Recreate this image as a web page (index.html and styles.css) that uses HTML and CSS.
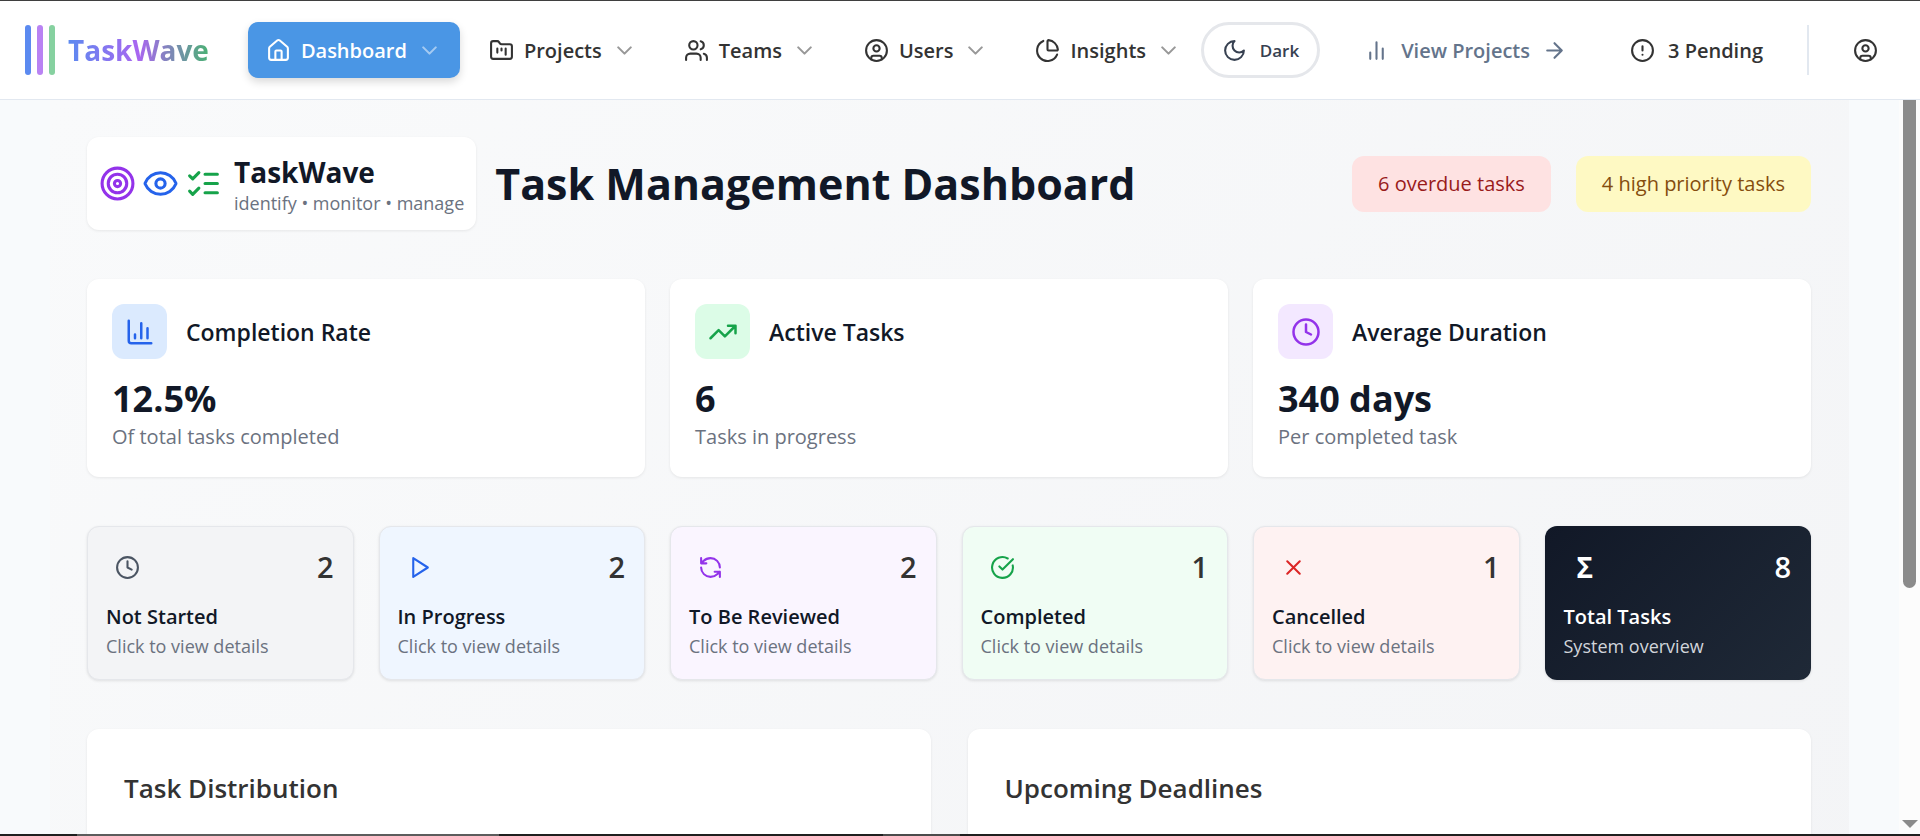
FILE: index.html
```html
<!DOCTYPE html>
<html lang="en">
<head>
<meta charset="utf-8">
<title>TaskWave</title>
<link rel="stylesheet" href="styles.css">
</head>
<body>
<svg class="sprite" aria-hidden="true">
  <symbol id="home" viewBox="0 0 24 24"><path d="M15 21v-8a1 1 0 0 0-1-1h-4a1 1 0 0 0-1 1v8"/><path d="M3 10a2 2 0 0 1 .709-1.528l7-5.999a2 2 0 0 1 2.582 0l7 5.999A2 2 0 0 1 21 10v9a2 2 0 0 1-2 2H5a2 2 0 0 1-2-2z"/></symbol>
  <symbol id="folder" viewBox="0 0 24 24"><path d="M4 20h16a2 2 0 0 0 2-2V8a2 2 0 0 0-2-2h-7.93a2 2 0 0 1-1.66-.9l-.82-1.2A2 2 0 0 0 7.93 3H4a2 2 0 0 0-2 2v13c0 1.1.9 2 2 2Z"/><path d="M8 10v4M12 10v2M16 10v6"/></symbol>
  <symbol id="users" viewBox="0 0 24 24"><path d="M16 21v-2a4 4 0 0 0-4-4H6a4 4 0 0 0-4 4v2"/><circle cx="9" cy="7" r="4"/><path d="M22 21v-2a4 4 0 0 0-3-3.87M16 3.13a4 4 0 0 1 0 7.75"/></symbol>
  <symbol id="user" viewBox="0 0 24 24"><circle cx="12" cy="12" r="10"/><circle cx="12" cy="10" r="3"/><path d="M7 20.662V19a2 2 0 0 1 2-2h6a2 2 0 0 1 2 2v1.662"/></symbol>
  <symbol id="pie" viewBox="0 0 24 24"><path d="M21 12c.552 0 1.005-.449.95-.998a10 10 0 0 0-8.953-8.951c-.55-.055-.998.398-.998.95v8a1 1 0 0 0 1 1z"/><path d="M21.21 15.89A10 10 0 1 1 8 2.83"/></symbol>
  <symbol id="chevron" viewBox="0 0 24 24"><path d="m6 9 6 6 6-6"/></symbol>
  <symbol id="moon" viewBox="0 0 24 24"><path d="M12 3a6 6 0 0 0 9 9 9 9 0 1 1-9-9Z"/></symbol>
  <symbol id="bars" viewBox="0 0 24 24"><path d="M18 20V10M12 20V4M6 20v-6"/></symbol>
  <symbol id="arrow" viewBox="0 0 24 24"><path d="M5 12h14M12 5l7 7-7 7"/></symbol>
  <symbol id="alert" viewBox="0 0 24 24"><circle cx="12" cy="12" r="10"/><path d="M12 8v4M12 16h.01"/></symbol>
  <symbol id="target" viewBox="0 0 24 24"><circle cx="12" cy="12" r="10"/><circle cx="12" cy="12" r="6"/><circle cx="12" cy="12" r="2"/></symbol>
  <symbol id="eye" viewBox="0 0 24 24"><path d="M2.062 12.348a1 1 0 0 1 0-.696 10.75 10.75 0 0 1 19.876 0 1 1 0 0 1 0 .696 10.75 10.75 0 0 1-19.876 0"/><circle cx="12" cy="12" r="3"/></symbol>
  <symbol id="checks" viewBox="0 0 24 24"><path d="m3 17 2 2 4-4M3 7l2 2 4-4M13 6h8M13 12h8M13 18h8"/></symbol>
  <symbol id="chart" viewBox="0 0 24 24"><path d="M3 3v16a2 2 0 0 0 2 2h16M18 17V9M13 17V5M8 17v-3"/></symbol>
  <symbol id="trend" viewBox="0 0 24 24"><path d="M22 7l-8.5 8.5-5-5L2 17M16 7h6v6"/></symbol>
  <symbol id="clock" viewBox="0 0 24 24"><circle cx="12" cy="12" r="10"/><path d="M12 6v6l4 2"/></symbol>
  <symbol id="play" viewBox="0 0 24 24"><path d="M6 3l14 9-14 9z"/></symbol>
  <symbol id="refresh" viewBox="0 0 24 24"><path d="M21 12a9 9 0 0 0-9-9 9.75 9.75 0 0 0-6.74 2.74L3 8M3 3v5h5M3 12a9 9 0 0 0 9 9 9.75 9.75 0 0 0 6.74-2.74L21 16M16 16h5v5"/></symbol>
  <symbol id="done" viewBox="0 0 24 24"><path d="M21.801 10A10 10 0 1 1 17 3.335M9 11l3 3L22 4"/></symbol>
  <symbol id="cross" viewBox="0 0 24 24"><path d="M18 6 6 18M6 6l12 12"/></symbol>
</svg>

<header class="topbar">
  <a class="logo" href="#">
    <span class="logo-bars"><i class="bar bar-blue"></i><i class="bar bar-purple"></i><i class="bar bar-green"></i></span>
    <span class="logo-text">TaskWave</span>
  </a>
  <nav class="nav">
    <button class="nav-item active"><svg class="icon"><use href="#home"/></svg>Dashboard<svg class="icon chev"><use href="#chevron"/></svg></button>
    <button class="nav-item"><svg class="icon"><use href="#folder"/></svg>Projects<svg class="icon chev"><use href="#chevron"/></svg></button>
    <button class="nav-item"><svg class="icon"><use href="#users"/></svg>Teams<svg class="icon chev"><use href="#chevron"/></svg></button>
    <button class="nav-item"><svg class="icon"><use href="#user"/></svg>Users<svg class="icon chev"><use href="#chevron"/></svg></button>
    <button class="nav-item"><svg class="icon"><use href="#pie"/></svg>Insights<svg class="icon chev"><use href="#chevron"/></svg></button>
  </nav>
  <div class="tools">
    <button class="theme"><svg class="icon"><use href="#moon"/></svg>Dark</button>
    <a class="view" href="#"><svg class="icon"><use href="#bars"/></svg>View Projects<svg class="icon"><use href="#arrow"/></svg></a>
    <button class="pending"><svg class="icon"><use href="#alert"/></svg>3 Pending</button>
    <span class="divider"></span>
    <button class="account" aria-label="Account"><svg class="icon"><use href="#user"/></svg></button>
  </div>
</header>

<div class="viewport">
  <div class="page">
    <main class="content">
      <section class="heading">
        <div class="brand">
          <div class="brand-icons">
            <svg class="icon-lg purple"><use href="#target"/></svg>
            <svg class="icon-lg blue"><use href="#eye"/></svg>
            <svg class="icon-lg green"><use href="#checks"/></svg>
          </div>
          <div class="brand-text">
            <div class="brand-name">TaskWave</div>
            <div class="brand-tag">identify • monitor • manage</div>
          </div>
        </div>
        <h1>Task Management Dashboard</h1>
        <div class="badges">
          <span class="badge overdue">6 overdue tasks</span>
          <span class="badge priority">4 high priority tasks</span>
        </div>
      </section>

      <section class="stats">
        <article class="card stat">
          <div class="stat-head"><span class="tile tile-blue"><svg class="icon-md"><use href="#chart"/></svg></span><h2>Completion Rate</h2></div>
          <div class="value">12.5%</div><div class="note">Of total tasks completed</div>
        </article>
        <article class="card stat">
          <div class="stat-head"><span class="tile tile-green"><svg class="icon-md"><use href="#trend"/></svg></span><h2>Active Tasks</h2></div>
          <div class="value">6</div><div class="note">Tasks in progress</div>
        </article>
        <article class="card stat">
          <div class="stat-head"><span class="tile tile-purple"><svg class="icon-md"><use href="#clock"/></svg></span><h2>Average Duration</h2></div>
          <div class="value">340 days</div><div class="note">Per completed task</div>
        </article>
      </section>

      <section class="statuses">
        <button class="status s-gray"><span class="status-top"><svg class="icon gray"><use href="#clock"/></svg><b>2</b></span><span class="status-name">Not Started</span><span class="status-sub">Click to view details</span></button>
        <button class="status s-blue"><span class="status-top"><svg class="icon blue"><use href="#play"/></svg><b>2</b></span><span class="status-name">In Progress</span><span class="status-sub">Click to view details</span></button>
        <button class="status s-purple"><span class="status-top"><svg class="icon purple"><use href="#refresh"/></svg><b>2</b></span><span class="status-name">To Be Reviewed</span><span class="status-sub">Click to view details</span></button>
        <button class="status s-green"><span class="status-top"><svg class="icon green"><use href="#done"/></svg><b>1</b></span><span class="status-name">Completed</span><span class="status-sub">Click to view details</span></button>
        <button class="status s-red"><span class="status-top"><svg class="icon red"><use href="#cross"/></svg><b>1</b></span><span class="status-name">Cancelled</span><span class="status-sub">Click to view details</span></button>
        <div class="status s-total"><span class="status-top"><span class="sigma">Σ</span><b>8</b></span><span class="status-name">Total Tasks</span><span class="status-sub">System overview</span></div>
      </section>

      <section class="panels">
        <article class="card panel"><h2>Task Distribution</h2></article>
        <article class="card panel"><h2>Upcoming Deadlines</h2></article>
      </section>
    </main>
  </div>
  <div class="scrollbar"><span class="thumb"></span><span class="down"></span></div>
</div>
<footer class="edge"><i class="seg seg-a"></i><i class="seg seg-b"></i><i class="seg seg-c"></i><i class="seg seg-d"></i></footer>
</body>
</html>
```

FILE: styles.css
```css
* { box-sizing: border-box; }
body {
  margin: 0;
  height: 100vh;
  display: flex;
  flex-direction: column;
  overflow: hidden;
  border-top: 1px solid #3f3f3f;
  background: #f8fafc;
  color: #333;
  font-family: "Open Sans", "Noto Sans", sans-serif;
}
button { font: inherit; color: inherit; background: none; border: 0; padding: 0; cursor: pointer; }
a { color: inherit; text-decoration: none; }
h1, h2 { margin: 0; }
svg { fill: none; stroke: currentColor; stroke-width: 2; stroke-linecap: round; stroke-linejoin: round; flex: none; display: block; }
.sprite { position: absolute; width: 0; height: 0; }
.icon { width: 25px; height: 25px; }
.icon-md { width: 30px; height: 30px; }
.icon-lg { width: 37px; height: 37px; }

.purple { color: #9333ea; }
.blue { color: #2563eb; }
.green { color: #16a34a; }
.red { color: #dc2626; }
.gray { color: #4b5563; }

/* Top bar */
.topbar {
  flex: none;
  display: flex;
  align-items: center;
  padding: 21px 42px 21px 25px;
  background: #fff;
  border-bottom: 1px solid #e2e8f0;
  font-size: 20px;
  font-weight: 600;
  white-space: nowrap;
}
.logo { display: flex; align-items: center; gap: 13px; margin-right: 39px; }
.logo-bars { display: flex; gap: 6px; }
.bar { width: 6px; height: 50px; border-radius: 3px; }
.bar-blue { background: #5b8af0; }
.bar-purple { background: #b983f3; }
.bar-green { background: #86d1a0; }
.logo-text {
  font-size: 28px;
  font-weight: 700;
  line-height: 40px;
  color: transparent;
  background: linear-gradient(90deg, #5b8af0, #a966f0 50%, #4bb174);
  -webkit-background-clip: text;
  background-clip: text;
}
.nav { display: flex; gap: 11px; }
.nav-item { display: flex; align-items: center; gap: 10px; height: 56px; padding: 0 18px; border-radius: 10px; }
.nav-item.active { background: #4a96e5; color: #fff; box-shadow: 0 4px 8px rgba(0, 0, 0, .15); }
.chev { opacity: .5; }
.tools { display: flex; align-items: center; margin-left: auto; gap: 44px; }
.theme {
  display: flex;
  align-items: center;
  gap: 13px;
  height: 56px;
  padding: 0 18px;
  border: 3px solid #e5e7eb;
  border-radius: 28px;
  color: #374151;
  font-size: 17px;
}
.view { display: flex; align-items: center; gap: 12px; color: #64748b; margin-right: 19px; }
.pending { display: flex; align-items: center; gap: 13px; }
.divider { width: 2px; height: 50px; background: #e2e8f0; }

/* Scrolling area */
.viewport { flex: 1; min-height: 0; display: flex; overflow: hidden; }
.page { flex: 1; min-width: 0; padding: 0 50px; overflow: hidden; }
.content { min-height: 100%; padding: 37px 38px 37px 37px; background: linear-gradient(135deg, #f9fafb, #f3f4f6); }
.scrollbar { width: 21px; background: #fcfcfc; display: flex; flex-direction: column; align-items: center; justify-content: space-between; padding-bottom: 6px; }
.thumb { width: 13px; flex: 0 0 67%; border-radius: 0 0 7px 7px; background: #8b8b8b; }
.down { border: 8px solid transparent; border-top-color: #8b8b8b; border-bottom: 0; }

.card { background: #fff; border-radius: 12px; box-shadow: 0 1px 3px rgba(0, 0, 0, .08); }

.heading { display: flex; align-items: center; }
.brand { display: flex; align-items: center; gap: 12px; padding: 12px; background: #fff; border-radius: 12px; box-shadow: 0 1px 3px rgba(0, 0, 0, .08); }
.brand-icons { display: flex; gap: 6px; }
.brand-text { padding-top: 6px; }
.brand-name { font-size: 28px; font-weight: 700; line-height: 34px; color: #111827; }
.brand-tag { font-size: 18px; line-height: 29px; color: #6b7280; }
h1 { margin-left: 19px; font-size: 43px; line-height: 60px; font-weight: 700; color: #111827; white-space: nowrap; }
.badges { margin-left: auto; display: flex; gap: 25px; white-space: nowrap; }
.badge { padding: 12px 26px; border-radius: 12px; font-size: 20px; line-height: 32px; }
.overdue { background: #fee2e2; color: #991b1b; }
.priority { background: #fef9c3; color: #854d0e; }

.stats { display: grid; grid-template-columns: repeat(3, 1fr); gap: 25px; margin-top: 49px; }
.stat { padding: 25px; }
.stat-head { display: flex; align-items: center; gap: 19px; margin-bottom: 18px; }
.stat-head h2 { font-size: 23px; line-height: 36px; font-weight: 600; color: #111827; }
.tile { display: grid; place-items: center; width: 55px; height: 55px; border-radius: 12px; }
.tile-blue { background: #dbeafe; color: #2563eb; }
.tile-green { background: #dcfce7; color: #16a34a; }
.tile-purple { background: #f3e8ff; color: #9333ea; }
.value { font-size: 36px; line-height: 44px; font-weight: 700; color: #111827; }
.note { font-size: 20px; line-height: 31px; color: #6b7280; }

.statuses { display: grid; grid-template-columns: repeat(6, 1fr); gap: 25px; margin-top: 49px; }
.status {
  display: flex;
  flex-direction: column;
  padding: 19px 19px 19px 18px;
  border: 1px solid #e5e7eb;
  border-radius: 12px;
  text-align: left;
  box-shadow: 0 1px 3px rgba(0, 0, 0, .1);
}
.status-top { display: flex; justify-content: space-between; align-items: center; height: 42px; padding-left: 9px; margin-bottom: 14px; }
.status-top b { font-size: 29px; line-height: 42px; font-weight: 600; }
.status-name { font-size: 20px; line-height: 30px; font-weight: 600; color: #111827; }
.status-sub { font-size: 18px; line-height: 28px; color: #6b7280; }
.s-gray { background: #f3f4f6; }
.s-blue { background: #eff6ff; }
.s-purple { background: #faf5ff; }
.s-green { background: #f0fdf4; }
.s-red { background: #fef2f2; }
.s-total { border-color: transparent; background: linear-gradient(135deg, #111827, #1f2937) border-box; color: #fff; }
.s-total .status-name { color: #fff; }
.s-total .status-sub { color: #d1d5db; }
.sigma { padding-left: 4px; font-size: 28px; line-height: 42px; font-weight: 700; }

.panels { display: grid; grid-template-columns: repeat(2, 1fr); gap: 37px; margin-top: 49px; }
.panel { min-height: 320px; padding: 37px; }
.panel h2 { font-size: 26px; line-height: 45px; font-weight: 600; }

/* Bottom edge strip */
.edge { flex: none; display: flex; height: 2px; background: #1f1f1f; }
.seg-a { flex: 0 0 4%; }
.seg-b { flex: 0 0 22%; background: #5c5c5c; }
.seg-c { flex: 0 0 20%; }
.seg-d { flex: 0 0 4%; background: #4b4b4b; }
```
